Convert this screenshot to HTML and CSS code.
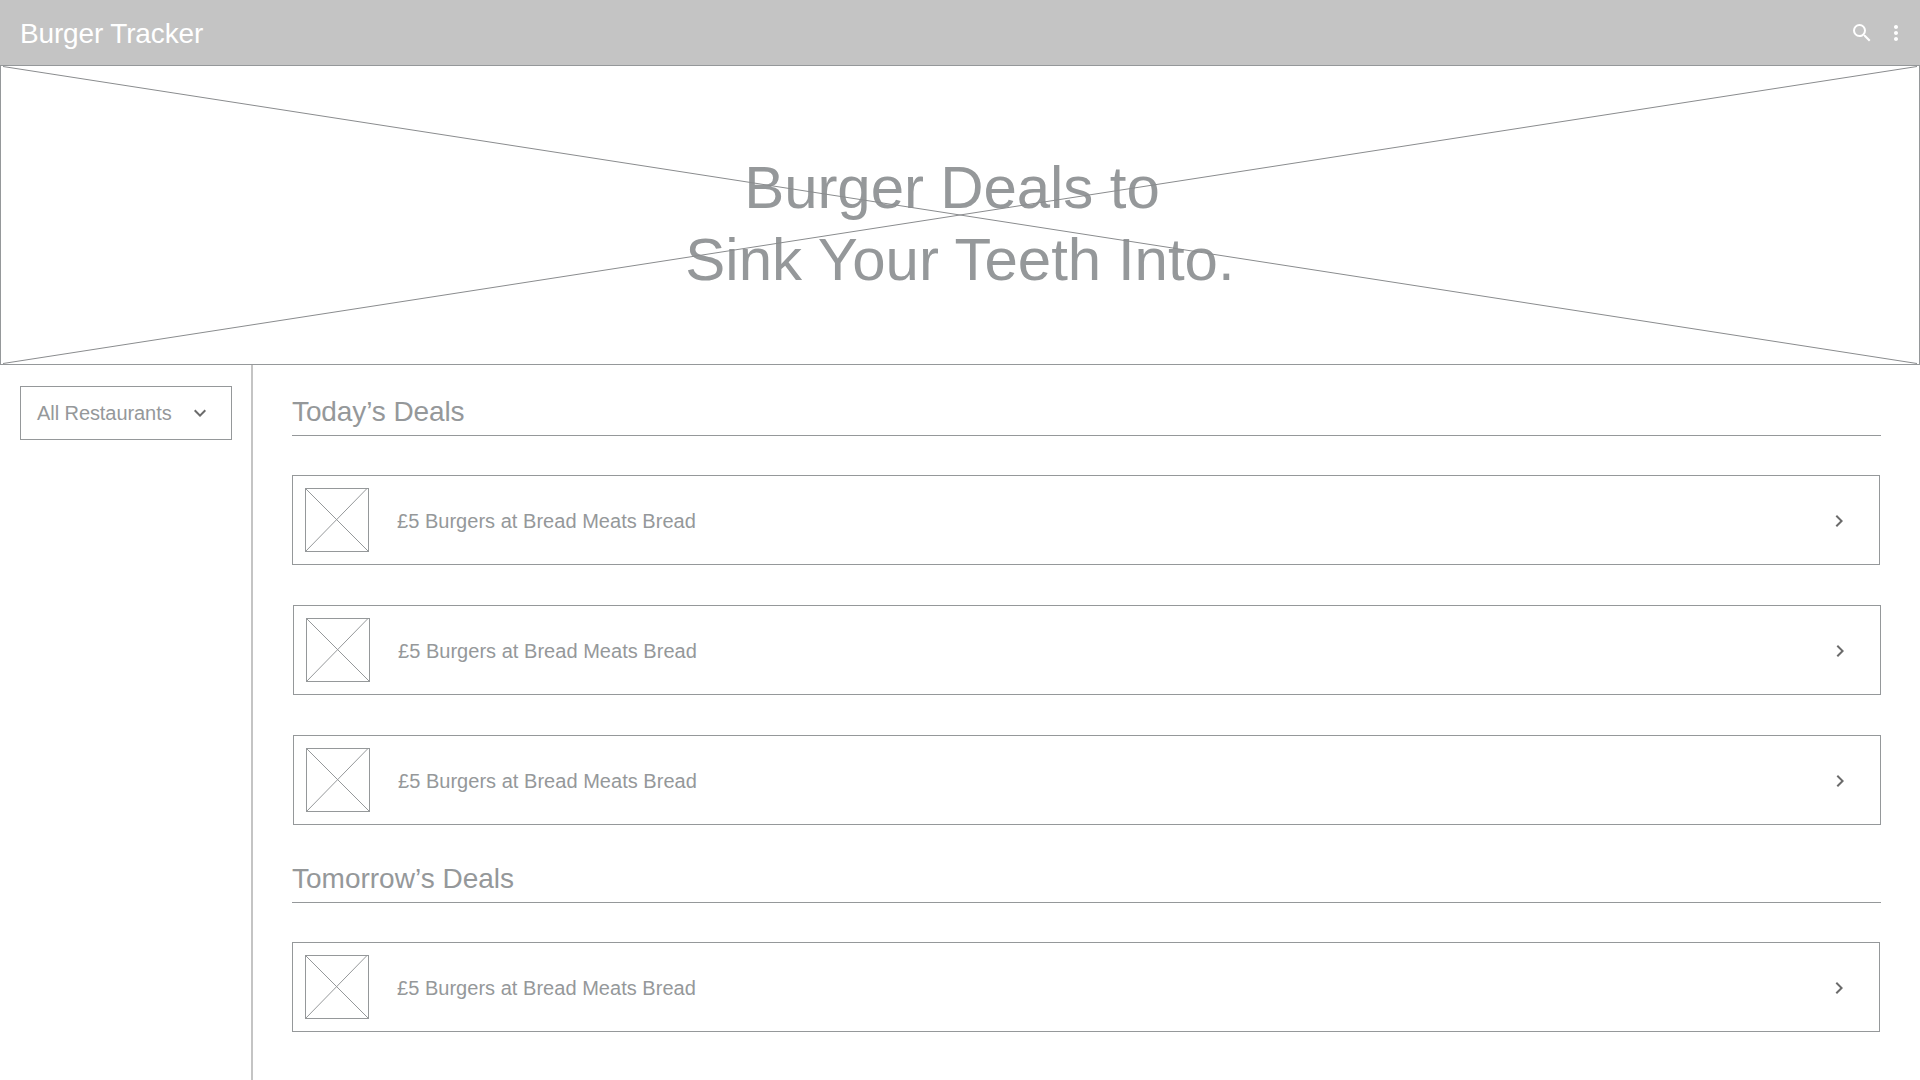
FILE: index.html
```html
<!DOCTYPE html>
<html lang="en">
<head>
<meta charset="utf-8">
<title>Burger Tracker</title>
<link rel="stylesheet" href="styles.css">
</head>
<body>
<header class="topbar">
  <h1 class="brand">Burger Tracker</h1>
  <div class="actions">
    <svg class="icon" viewBox="0 0 24 24"><path d="M15.5 14h-.79l-.28-.27A6.47 6.47 0 0 0 16 9.5 6.5 6.5 0 1 0 9.5 16c1.61 0 3.09-.59 4.23-1.57l.27.28v.79l5 4.99L20.49 19l-4.99-5zm-6 0C7.01 14 5 11.99 5 9.5S7.01 5 9.5 5 14 7.01 14 9.5 11.99 14 9.5 14z"/></svg>
    <svg class="icon" viewBox="0 0 24 24"><path d="M12 8c1.1 0 2-.9 2-2s-.9-2-2-2-2 .9-2 2 .9 2 2 2zm0 2c-1.1 0-2 .9-2 2s.9 2 2 2 2-.9 2-2-.9-2-2-2zm0 6c-1.1 0-2 .9-2 2s.9 2 2 2 2-.9 2-2-.9-2-2-2z"/></svg>
  </div>
</header>
<section class="hero">
  <svg class="hero-cross" viewBox="0 0 1918 298" preserveAspectRatio="none"><path d="M2 .5L1916 297.5M2 297.5L1916 .5"/></svg>
  <h2 class="hero-title"><span class="hero-line hero-first">Burger Deals to</span><span class="hero-line">Sink Your Teeth Into.</span></h2>
</section>
<div class="layout">
  <aside class="sidebar">
    <div class="select">
      <span class="select-label">All Restaurants</span>
      <svg class="icon" viewBox="0 0 24 24"><path d="M16.59 8.59L12 13.17 7.41 8.59 6 10l6 6 6-6z"/></svg>
    </div>
  </aside>
  <main class="deals">
    <section class="group">
      <h3 class="group-title today">Today’s Deals</h3>
      <div class="cards">
        <article class="card">
          <svg class="thumb" viewBox="0 0 64 64"><rect x=".5" y=".5" width="63" height="63"/><path d="M.5 .5L63.5 63.5M.5 63.5L62 .5"/></svg>
          <span class="card-title">£5 Burgers at Bread Meats Bread</span>
          <svg class="icon" viewBox="0 0 24 24"><path d="M10 6L8.59 7.41 13.17 12l-4.58 4.59L10 18l6-6z"/></svg>
        </article>
        <article class="card shifted">
          <svg class="thumb" viewBox="0 0 64 64"><rect x=".5" y=".5" width="63" height="63"/><path d="M.5 .5L63.5 63.5M.5 63.5L62 .5"/></svg>
          <span class="card-title">£5 Burgers at Bread Meats Bread</span>
          <svg class="icon" viewBox="0 0 24 24"><path d="M10 6L8.59 7.41 13.17 12l-4.58 4.59L10 18l6-6z"/></svg>
        </article>
        <article class="card shifted">
          <svg class="thumb" viewBox="0 0 64 64"><rect x=".5" y=".5" width="63" height="63"/><path d="M.5 .5L63.5 63.5M.5 63.5L62 .5"/></svg>
          <span class="card-title">£5 Burgers at Bread Meats Bread</span>
          <svg class="icon" viewBox="0 0 24 24"><path d="M10 6L8.59 7.41 13.17 12l-4.58 4.59L10 18l6-6z"/></svg>
        </article>
      </div>
    </section>
    <section class="group">
      <h3 class="group-title">Tomorrow’s Deals</h3>
      <div class="cards">
        <article class="card">
          <svg class="thumb" viewBox="0 0 64 64"><rect x=".5" y=".5" width="63" height="63"/><path d="M.5 .5L63.5 63.5M.5 63.5L62 .5"/></svg>
          <span class="card-title">£5 Burgers at Bread Meats Bread</span>
          <svg class="icon" viewBox="0 0 24 24"><path d="M10 6L8.59 7.41 13.17 12l-4.58 4.59L10 18l6-6z"/></svg>
        </article>
      </div>
    </section>
  </main>
</div>
</body>
</html>
```
FILE: styles.css
```css
* { box-sizing: border-box; }
body {
  margin: 0;
  height: 1080px;
  display: flex;
  flex-direction: column;
  overflow: hidden;
  background: #fff;
  color: #95989a;
  font-family: "Liberation Sans", Arial, sans-serif;
}
h1, h2, h3 { margin: 0; font-weight: 400; }
svg { display: block; flex: none; }
.icon { width: 24px; height: 24px; fill: #6b6b6b; }

.topbar {
  height: 65px;
  flex: none;
  display: flex;
  align-items: center;
  justify-content: space-between;
  padding: 1px 12px 0 20px;
  background: #c4c4c4;
  color: #fff;
}
.brand { margin-top: 2px; font-size: 28px; line-height: 32px; letter-spacing: -0.15px; }
.actions { display: flex; gap: 10px; }
.actions .icon { fill: #fff; }

.hero {
  position: relative;
  height: 300px;
  flex: none;
  display: flex;
  justify-content: center;
  padding-top: 86px;
  border: 1px solid #95989a;
}
.hero-cross {
  position: absolute;
  inset: 0;
  width: 100%;
  height: 100%;
  stroke: #8a8c8e;
  fill: none;
}
.hero-title { font-size: 60px; line-height: 72px; }
.hero-line { display: block; text-align: center; white-space: nowrap; }
.hero-first { padding-right: 16px; letter-spacing: -0.1px; }

.layout { flex: 1; display: flex; }
.sidebar { width: 253px; padding: 21px 19px 0 20px; border-right: 2px solid #c4c4c4; }
.select {
  height: 54px;
  display: flex;
  align-items: center;
  justify-content: space-between;
  padding: 0 19px 0 16px;
  border: 1px solid #95989a;
}
.select-label, .card-title { font-size: 20px; line-height: 24px; white-space: nowrap; }
.select-label { letter-spacing: -0.07px; }

.deals { flex: 1; padding: 31px 39px 0; }
.group + .group { margin-top: 38px; }
.group-title {
  height: 40px;
  font-size: 28px;
  line-height: 32px;
  border-bottom: 1px solid #95989a;
}
.today { letter-spacing: -0.1px; }
.cards { display: flex; flex-direction: column; gap: 40px; padding-top: 39px; }
.card {
  width: 1588px;
  height: 90px;
  display: flex;
  align-items: center;
  padding: 0 28px 0 12px;
  border: 1px solid #95989a;
}
.shifted { margin-left: 1px; }
.thumb { width: 64px; height: 64px; fill: none; stroke: #95989a; }
.card-title { flex: 1; margin: 2px 0 0 28px; letter-spacing: 0.03px; }
.card .icon { margin-top: 2px; }
```
